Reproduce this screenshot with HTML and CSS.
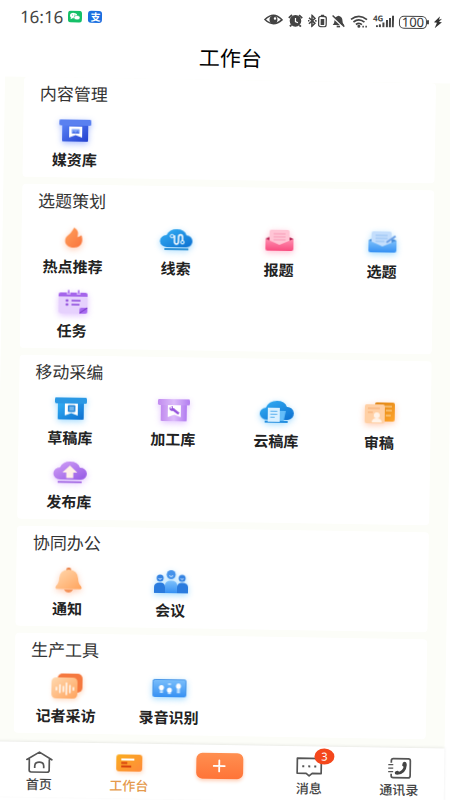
FILE: index.html
```html
<!DOCTYPE html>
<html lang="zh-CN">
<head>
  <meta charset="UTF-8">
  <meta name="viewport" content="width=device-width, initial-scale=1">
  <title>工作台</title>
  <link rel="stylesheet" href="styles.css">
</head>
<body>
  <!-- shared gradients -->
  <svg class="defs" width="0" height="0" aria-hidden="true">
    <defs>
      <linearGradient id="indigo" x1="0" y1="0" x2="1" y2="1"><stop offset="0" stop-color="#5a83f6"/><stop offset="1" stop-color="#2341cf"/></linearGradient>
      <linearGradient id="blue" x1="0" y1="0" x2="1" y2="1"><stop offset="0" stop-color="#35b1f5"/><stop offset="1" stop-color="#0c6fd0"/></linearGradient>
      <linearGradient id="sky" x1="0" y1="0" x2="0" y2="1"><stop offset="0" stop-color="#7cc0fb"/><stop offset="1" stop-color="#3590f3"/></linearGradient>
      <linearGradient id="purple" x1="0" y1="0" x2="1" y2="1"><stop offset="0" stop-color="#d3a2f7"/><stop offset="1" stop-color="#9457e4"/></linearGradient>
      <linearGradient id="lilac" x1="0" y1="0" x2="1" y2="0"><stop offset="0" stop-color="#c18bef"/><stop offset=".5" stop-color="#dcbcfa"/><stop offset="1" stop-color="#b27cf0"/></linearGradient>
      <linearGradient id="pink" x1="0" y1="0" x2="0" y2="1"><stop offset="0" stop-color="#ff8fb0"/><stop offset="1" stop-color="#f94c80"/></linearGradient>
      <linearGradient id="peach" x1="0" y1="0" x2="1" y2="1"><stop offset="0" stop-color="#ffd9b0"/><stop offset="1" stop-color="#ffa35c"/></linearGradient>
      <linearGradient id="orange" x1="0" y1="0" x2="1" y2="1"><stop offset="0" stop-color="#ffa05c"/><stop offset="1" stop-color="#f9743c"/></linearGradient>
      <linearGradient id="amber" x1="0" y1="0" x2="1" y2="1"><stop offset="0" stop-color="#dd8413"/><stop offset="1" stop-color="#ffa42c"/></linearGradient>
      <linearGradient id="gold" x1="0" y1="0" x2="1" y2="1"><stop offset="0" stop-color="#faad1f"/><stop offset="1" stop-color="#ff8a3c"/></linearGradient>
    </defs>
  </svg>

  <div class="app">
    <header>
      <div class="status">
        <span class="time">16:16</span>
        <svg class="app-icon" width="14" height="12" viewBox="0 0 14 12">
          <rect width="14" height="12" rx="3" fill="#16c068"/>
          <ellipse cx="5.6" cy="5" rx="3.6" ry="2.7" fill="#fff"/><path d="M3 6.500L2.600 8.600L5 7.500Z" fill="#fff"/>
          <ellipse cx="9" cy="7" rx="3" ry="2.200" fill="#fff" stroke="#16c068" stroke-width=".5"/>
          <circle cx="4.400" cy="4.500" r=".5" fill="#16c068"/><circle cx="6.800" cy="4.500" r=".5" fill="#16c068"/>
        </svg>
        <span class="pay">支</span>
        <div class="status-right">
          <svg width="19" height="12" viewBox="0 0 19 12"><path d="M1 6Q9.500-3 18 6Q9.500 14 1 6Z" fill="none" stroke="#444" stroke-width="1.500"/><circle cx="9.500" cy="6" r="4" fill="#444"/><circle cx="11" cy="4.700" r="1.200" fill="#fff"/></svg>
          <svg width="15" height="13" viewBox="0 0 15 13"><circle cx="7.500" cy="6.800" r="5.800" fill="#444"/><path d="M.8 4L4 1M14.200 4L11 1M3.500 11L2 12.500M11.500 11L13 12.500" stroke="#444" stroke-width="1.800"/><path d="M7.500 4V7.500L10 8.600" fill="none" stroke="#fff" stroke-width="1.200"/></svg>
          <div class="bt">
            <svg width="9" height="13" viewBox="0 0 9 13"><path d="M1 3.500L7 9L4 12V1L7 4L1 9.500" fill="none" stroke="#444" stroke-width="1.500"/><path d="M0 6.500H1.500M7 6.500H8.700" stroke="#444" stroke-width="1.500"/></svg>
            <svg width="9" height="13" viewBox="0 0 9 13"><rect x=".7" y="2" width="7.600" height="10.300" rx="2" fill="none" stroke="#444" stroke-width="1.300"/><path d="M3 .8H6" stroke="#444" stroke-width="1.400"/><rect x="2.700" y="4.500" width="3.600" height="6" fill="#444"/></svg>
          </div>
          <svg width="13" height="13" viewBox="0 0 13 13"><path d="M.8 10.300Q2.500 9 2.500 6Q2.500 2 6.500 1Q10.500 2 10.500 6Q10.500 9 12.200 10.300Z" fill="#444"/><path d="M4.800 11.800H8.200" stroke="#444" stroke-width="1.800"/><path d="M0 2L12 13" stroke="#fff" stroke-width="1.500"/><path d="M.5 .8L12.500 11.800" stroke="#444" stroke-width="1.500"/></svg>
          <svg width="18" height="13" viewBox="0 0 18 13"><path d="M1 4.500Q9-2 17 4.500M3.500 7Q9 2.500 14.500 7M6 9.500Q9 7 12 9.500" fill="none" stroke="#444" stroke-width="1.700"/><circle cx="9" cy="11.300" r="1.500" fill="#444"/><path d="M12.500 11.500H14M15.500 11.500H17" stroke="#444" stroke-width="1.700"/></svg>
          <div class="signal">
            <span>4G</span>
            <svg width="18" height="12" viewBox="0 0 18 12"><path d="M1 10V12M4 9V12M7.500 7V12M11 4.500V12M14 2.500V12M17 0V12" stroke="#444" stroke-width="2"/></svg>
          </div>
          <div class="power"><span class="battery">100</span><i></i></div>
          <svg width="8" height="12" viewBox="0 0 8 12"><path d="M6 0L0 6L3 6.400L.8 12L8 6L5 5.600L8 2.500L5 3.500Z" fill="#333"/></svg>
        </div>
      </div>
      <h1>工作台</h1>
    </header>

    <main>
      <section class="card">
        <h2>内容管理</h2>
        <div class="grid">
          <a class="tile" href="#">
            <svg class="glow-indigo" viewBox="0 0 40 32"><rect x="7" y="8" width="26" height="18" rx="1" fill="url(#indigo)"/><rect x="4" y="4" width="32" height="6" rx="1.500" fill="#5a80f0"/><path d="M14 11H27V22L20.500 19.500L14 22Z" fill="#fff"/><path d="M16.500 13.500H24.500V17.500H16.500Z" fill="#7da2f8"/><path d="M16.500 18L18.500 15.500L20.500 17L22.500 15L24.500 18Z" fill="#4b72e8"/></svg>
            <span>媒资库</span>
          </a>
        </div>
      </section>

      <section class="card">
        <h2>选题策划</h2>
        <div class="grid">
          <a class="tile" href="#">
            <svg class="glow-orange" viewBox="0 0 40 32"><path d="M20.500 5C25 7.500 25 11 23.700 14.500Q26 14 28 12.500C30.500 20 27 25 20.500 25C14 25 10.500 21 12 16C13 13 15.500 12.500 17 10.500Q18.500 8.500 20.500 5Z" fill="url(#orange)"/></svg>
            <span>热点推荐</span>
          </a>
          <a class="tile" href="#">
            <svg class="glow-blue" viewBox="0 0 40 32"><path d="M11 23A7 6 0 0 1 10 11Q13 5 20 5Q28 5 30 11A6 6 0 0 1 30 23Z" fill="url(#blue)"/><path d="M8 25H32" stroke="#0a7ccb" stroke-width="1.600"/><path d="M15.500 12H18V17Q18 20 20 20Q22 20 22 17V13Q22 10.500 24 10.500Q26 10.500 26 13V16.500" fill="none" stroke="#fff" stroke-width="1.500"/><circle cx="15.500" cy="12" r="1.700" fill="#1d92e6" stroke="#fff"/><circle cx="26" cy="18" r="1.700" fill="#1d92e6" stroke="#fff"/></svg>
            <span>线索</span>
          </a>
          <a class="tile" href="#">
            <svg class="glow-pink" viewBox="0 0 40 32"><path d="M6 13L9 11.500H31L34 13V17H6Z" fill="#b92c59"/><rect x="10" y="4" width="20" height="17" rx="2" fill="#ffc5d5"/><path d="M14 8H26M14 11H26M14 14H26" stroke="#f79cb7" stroke-width="1.200"/><path d="M6 13L20 19L34 13V23Q34 25 32 25H8Q6 25 6 23Z" fill="url(#pink)"/></svg>
            <span>报题</span>
          </a>
          <a class="tile" href="#">
            <svg class="glow-blue" viewBox="0 0 40 32"><path d="M6 13L9 11.500H31L34 13V17H6Z" fill="#4b8fdb"/><rect x="9" y="4" width="20" height="17" rx="2" fill="#c4defc"/><path d="M13 8H25M13 11H25M13 14H22" stroke="#94bff2" stroke-width="1.200"/><path d="M6 13L20 19L34 13V23Q34 25 32 25H8Q6 25 6 23Z" fill="url(#sky)"/><path d="M24 15L33 8.500" stroke="#6b9fe5" stroke-width="2"/></svg>
            <span>选题</span>
          </a>
          <a class="tile" href="#">
            <svg class="glow-purple" viewBox="0 0 40 32"><rect x="6" y="6" width="29" height="21" rx="2.500" fill="#e6d1fd"/><path d="M6 10V8.500Q6 6 8.500 6H32.500Q35 6 35 8.500V10Z" fill="#a565eb"/><path d="M16 4V8M26 4V8" stroke="#fff" stroke-width="3"/><path d="M16 3.500V7.500M26 3.500V7.500" stroke="#a565eb" stroke-width="1.600"/><circle cx="14.500" cy="14" r="1.300" fill="#8b45da"/><circle cx="14.500" cy="18" r="1.300" fill="#8b45da"/><path d="M19 14H28M19 18H27" stroke="#8b45da" stroke-width="1.700"/><path d="M27 27V23Q27 21 29 21H35V24.500Q35 27 32.500 27Z" fill="#a86af0"/><path d="M27 26.500L35 21" stroke="#6e2fbd"/></svg>
            <span>任务</span>
          </a>
        </div>
      </section>

      <section class="card">
        <h2>移动采编</h2>
        <div class="grid">
          <a class="tile" href="#">
            <svg class="glow-blue" viewBox="0 0 40 32"><rect x="7" y="8" width="26" height="18" rx="1" fill="url(#blue)"/><rect x="4" y="4" width="32" height="6" rx="1.500" fill="#2a98e4"/><path d="M14 10H27V22L20.500 19.500L14 22Z" fill="#fff"/><rect x="17" y="11.500" width="7.500" height="7" rx="1" fill="#2386d8"/><path d="M18.500 14H23M18.500 16H23" stroke="#bfe2fb"/></svg>
            <span>草稿库</span>
          </a>
          <a class="tile" href="#">
            <svg class="glow-purple" viewBox="0 0 40 32"><rect x="7" y="8" width="26" height="18" rx="1" fill="url(#lilac)"/><rect x="4" y="4" width="32" height="6" rx="1.500" fill="url(#lilac)"/><path d="M14 10H27V22L20.500 19.500L14 22Z" fill="#fff"/><path d="M19 14L25 18.500" stroke="#9552dc" stroke-width="2.400"/><path d="M16.300 11.500A2.500 2.500 0 1 0 20.500 13.500L19 12.800L18.800 11A2.500 2.500 0 0 0 17.500 11L18 13L16.700 13.700Z" fill="#9552dc"/></svg>
            <span>加工库</span>
          </a>
          <a class="tile" href="#">
            <svg class="glow-blue" viewBox="0 0 40 32"><path d="M11 23A7 6 0 0 1 9 11Q12 4 20 4Q28 4 30 10A6.500 6.500 0 0 1 31 23Z" fill="url(#blue)"/><path d="M8 25H31" stroke="#1485dc" stroke-width="1.800"/><path d="M22 14H29L27 24H22Z" fill="#63bcf8"/><path d="M11 11H23V25H11Z" fill="#d9f0ff"/><path d="M13.500 14.500H20.500M13.500 17.500H20.500M13.500 20.500H18" stroke="#58b0ee"/></svg>
            <span>云稿库</span>
          </a>
          <a class="tile" href="#">
            <svg class="glow-orange" viewBox="0 0 40 32"><rect x="15" y="4" width="20" height="19" rx="2" fill="url(#amber)"/><path d="M25 8H32M26 12H32M26 17H31" stroke="#ffe0b0" stroke-width="1.200"/><path d="M5 8Q5 6 7 6H23Q25 6 25 8V23Q25 25 23 25H7Q5 25 5 23Z" fill="#ffd0a5"/><path d="M8 10H20M8 14H13" stroke="#f6ac73" stroke-width="1.200"/><circle cx="17" cy="17" r="3" fill="#fff3e9"/><path d="M12 24Q12 20 17 20Q22 20 22 24Z" fill="#fff3e9"/></svg>
            <span>审稿</span>
          </a>
          <a class="tile" href="#">
            <svg class="glow-purple" viewBox="0 0 40 32"><path d="M10 22A6.500 6 0 0 1 10 10Q13 4 20 4Q28 4 30 10A6.500 6 0 0 1 31 22Z" fill="url(#purple)"/><path d="M8 24.500H32" stroke="#9a5ae0" stroke-width="1.600"/><path d="M20 8L27.500 15H23.500V20.500H16.500V15H12.500Z" fill="#fff0e8"/></svg>
            <span>发布库</span>
          </a>
        </div>
      </section>

      <section class="card">
        <h2>协同办公</h2>
        <div class="grid">
          <a class="tile" href="#">
            <svg class="glow-orange" viewBox="0 0 40 32"><circle cx="20.500" cy="5.500" r="2.500" fill="#e87f45"/><path d="M16 25H25Q23.500 28 20.500 28Q17.500 28 16 25Z" fill="#f4935a"/><path d="M20.500 5Q29.500 5.500 30 14Q30 19 33 21.500Q34.500 24.500 32 24.500H9Q6.500 24.500 8 21.500Q11 19 11 14Q11.500 5.500 20.500 5Z" fill="url(#peach)"/></svg>
            <span>通知</span>
          </a>
          <a class="tile" href="#">
            <svg class="glow-blue" viewBox="0 0 40 32"><circle cx="9" cy="12" r="3.500" fill="#3583e2"/><circle cx="31" cy="12" r="3.500" fill="#3583e2"/><path d="M3 27V21Q3 16.500 9 16.500Q14 16.500 14 21V27Z" fill="#2a7bde"/><path d="M26 27V21Q26 16.500 31 16.500Q37 16.500 37 21V27Z" fill="#2a7bde"/><circle cx="20" cy="8.500" r="4.500" fill="#4492ea"/><path d="M18 9.500Q20 11.500 22 9.500M7.500 12.500Q9 14 10.500 12.500M29.500 12.500Q31 14 32.500 12.500" fill="none" stroke="#d6eaff"/><path d="M14 27V19Q14 14.500 20 14.500Q26 14.500 26 19V27Z" fill="url(#sky)"/></svg>
            <span>会议</span>
          </a>
        </div>
      </section>

      <section class="card">
        <h2>生产工具</h2>
        <div class="grid">
          <a class="tile" href="#">
            <svg class="glow-peach" viewBox="0 0 40 32"><rect x="11" y="2" width="25" height="19" rx="5" fill="#f5793f"/><path d="M10 6H26Q31 6 31 11V22Q31 27 26 27H10Q5 27 5 22V11Q5 6 10 6Z" fill="url(#peach)"/><path d="M10 16V18.500M13.500 13.500V21M17 15V20M20 11.500V23M23.500 14V21M27 16V18.500" stroke="#fff" stroke-width="1.400" stroke-linecap="round"/></svg>
            <span>记者采访</span>
          </a>
          <a class="tile" href="#">
            <svg class="glow-blue" viewBox="0 0 40 32"><rect x="3" y="6" width="34" height="18" rx="2.500" fill="url(#sky)"/><path d="M3.500 21V8.500Q3.500 6.500 5.500 6.500H34.500Q36.500 6.500 36.500 8.500V21" fill="none" stroke="#4b98e8"/><path d="M12 15V20M20 10V12M20 18V21M29 10V12M29 13V20" stroke="#b8ddff" stroke-width="3"/><circle cx="12" cy="14.500" r="2.500" fill="#fff"/><circle cx="20" cy="17" r="2.500" fill="#fff"/><circle cx="29" cy="13" r="2.500" fill="#fff"/></svg>
            <span>录音识别</span>
          </a>
        </div>
      </section>
    </main>

    <nav class="tabbar">
      <a href="#">
        <svg width="28" height="24" viewBox="0 0 28 24"><path d="M4 9.500V20Q4 22 6 22H22Q24 22 24 20V9.500M1.500 9.500L14 2L26.500 9.500" fill="none" stroke="#555" stroke-width="1.700" stroke-linecap="round" stroke-linejoin="round"/><path d="M9.500 18V16Q9.500 12 14 12Q18.500 12 18.500 16V18" fill="none" stroke="#555" stroke-width="1.700"/></svg>
        <span>首页</span>
      </a>
      <a class="active" href="#">
        <svg class="glow-peach" width="28" height="24" viewBox="0 0 28 24"><rect x="1" y="3" width="26" height="17" rx="3" fill="url(#gold)"/><path d="M6 8H19" stroke="#fff" stroke-width="2"/><path d="M6 11.500H12M6 15H16" stroke="#d8430f" stroke-width="2"/></svg>
        <span>工作台</span>
      </a>
      <button class="add" type="button" aria-label="add">
        <svg width="14" height="14" viewBox="0 0 14 14"><path d="M7 1.500V12.500M1.500 7H12.500" stroke="#fff" stroke-width="1.800" stroke-linecap="round"/></svg>
      </button>
      <a href="#">
        <svg width="28" height="24" viewBox="0 0 28 24"><path d="M2 4H26V19H17L14 21.500L11 19H2Z" fill="none" stroke="#555" stroke-width="1.700" stroke-linejoin="round"/><path d="M7 12H9M13 12H15M19 12H21" stroke="#555" stroke-width="2"/></svg>
        <b class="badge">3</b>
        <span>消息</span>
      </a>
      <a href="#">
        <svg width="28" height="24" viewBox="0 0 28 24"><path d="M6 7V5Q6 3 8 3H23Q25 3 25 5V20Q25 22 23 22H8Q6 22 6 20V18" fill="none" stroke="#555" stroke-width="1.700"/><path d="M3 9H8M3 12.500H8M3 16H8" stroke="#555" stroke-width="1.300"/><path d="M19 6Q21.500 6 21.500 9Q21 18 12 19Q9.500 19 9.500 17Q10 15 12.500 15L14 16Q18 14 18.300 11L17 10Q16.500 7 19 6Z" fill="#444"/></svg>
        <span>通讯录</span>
      </a>
    </nav>
  </div>
</body>
</html>
```

FILE: styles.css
```css
* {
  box-sizing: border-box;
}
body {
  margin: 0;
  background: #fff;
  color: #222;
  font-family: "Noto Sans", "Noto Sans CJK SC", sans-serif;
  overflow: hidden;
}
.defs {
  position: absolute;
}
a {
  color: inherit;
  text-decoration: none;
}
svg {
  flex-shrink: 0;
}
.app {
  min-height: 100vh;
  display: flex;
  flex-direction: column;
  transform: rotate(0.9deg);
}

/* status bar and title */
.status {
  display: flex;
  align-items: center;
  height: 38px;
  padding: 0 14px;
}
.time {
  font-size: 17px;
  color: #444;
  margin-right: 5px;
}
.app-icon {
  margin-right: 6px;
}
.pay {
  width: 14px;
  height: 12px;
  border-radius: 3px;
  background: #1b6fe0;
  color: #fff;
  font-size: 10px;
  font-weight: 700;
  line-height: 12px;
  text-align: center;
}
.status-right {
  display: flex;
  align-items: center;
  gap: 5px;
  margin-left: auto;
}
.bt {
  display: flex;
  gap: 1px;
}
.signal {
  display: flex;
  align-items: flex-end;
  position: relative;
  padding-left: 3px;
}
.signal span {
  position: absolute;
  left: 0;
  top: -1px;
  font-size: 8px;
  font-weight: 700;
  line-height: 8px;
  color: #444;
}
.power {
  display: flex;
  align-items: center;
}
.battery {
  width: 28px;
  height: 13px;
  border: 1px solid #444;
  border-radius: 5px;
  font-size: 13px;
  line-height: 11px;
  text-align: center;
  color: #333;
}
.power i {
  width: 2px;
  height: 4px;
  background: #444;
}
h1 {
  margin: 0;
  height: 42px;
  line-height: 40px;
  font-size: 21px;
  font-weight: 400;
  text-align: center;
  color: #000;
}

/* cards */
main {
  flex: 1;
  display: flex;
  flex-direction: column;
  gap: 7px;
  padding: 0 19px 9px;
  background: #fcfdf8;
}
.card {
  background: #fff;
  border-radius: 4px;
  padding: 5px 0 8px;
}
h2 {
  margin: 0 0 9px;
  padding-left: 16px;
  font-size: 17px;
  font-weight: 400;
  line-height: 24px;
  color: #333;
}
.grid {
  display: grid;
  grid-template-columns: repeat(4, 1fr);
  row-gap: 10px;
}
.tile {
  display: flex;
  flex-direction: column;
  align-items: center;
  gap: 2px;
  font-size: 15px;
  font-weight: 700;
  line-height: 20px;
}
.tile svg {
  width: 40px;
  height: 32px;
}
.glow-indigo {
  filter: drop-shadow(0 2px 3px #a9bcff);
}
.glow-blue {
  filter: drop-shadow(0 2px 3px #a5dcff);
}
.glow-purple {
  filter: drop-shadow(0 2px 3px #e3c6ff);
}
.glow-pink {
  filter: drop-shadow(0 2px 3px #ffc0d3);
}
.glow-orange {
  filter: drop-shadow(0 2px 3px #ffcdb4);
}
.glow-peach {
  filter: drop-shadow(1px 2px 2px #ffe0cb);
}

/* bottom tabs */
.tabbar {
  display: grid;
  grid-template-columns: repeat(5, 1fr);
  height: 55px;
  padding-top: 8px;
  background: #fff;
  box-shadow: 0 -1px 3px rgba(0, 0, 0, 0.08);
}
.tabbar a {
  position: relative;
  display: flex;
  flex-direction: column;
  align-items: center;
  font-size: 13px;
  font-weight: 500;
  line-height: 20px;
  color: #444;
}
.tabbar .active {
  color: #e59a4c;
}
.add {
  justify-self: center;
  display: flex;
  align-items: center;
  justify-content: center;
  width: 47px;
  height: 26px;
  padding: 0;
  border: 0;
  border-radius: 6px;
  background: linear-gradient(#ff8f50, #ff7438);
  box-shadow: 0 2px 4px #ffd0b8;
  cursor: pointer;
}
.badge {
  position: absolute;
  left: 50%;
  top: -6px;
  width: 20px;
  height: 16px;
  margin-left: 5px;
  border-radius: 50%;
  background: #f4471c;
  color: #fff;
  font-size: 11px;
  font-weight: 400;
  line-height: 16px;
  text-align: center;
}
```
